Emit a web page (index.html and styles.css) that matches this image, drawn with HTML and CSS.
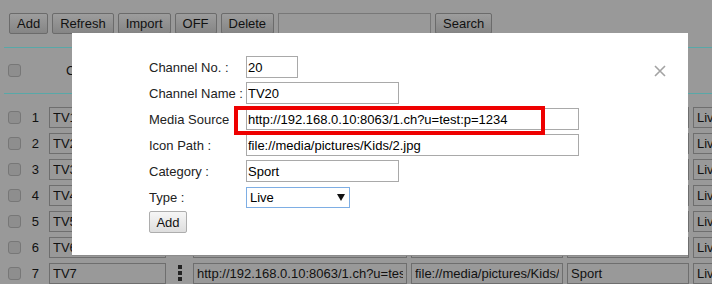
FILE: index.html
```html
<!DOCTYPE html>
<html lang="en">
<head>
    <meta charset="UTF-8">
    <meta name="viewport" content="width=device-width, initial-scale=1.0">
    <title>Channels</title>
    <link rel="stylesheet" href="styles.css">
</head>
<body>
    <div class="page">
        <div class="toolbar">
            <button>Add</button>
            <button>Refresh</button>
            <button>Import</button>
            <button>OFF</button>
            <button>Delete</button>
            <input type="text" class="search-box">
            <button>Search</button>
        </div>

        <div class="channel-list">
            <div class="list-head">
                <span class="check"></span>
                <span class="head-title">Channel No.</span>
            </div>
            <div class="list-body">
                <div class="row">
                    <span class="check"></span><span class="num">1</span>
                    <input type="text" class="cell-name" value="TV1">
                    <span class="more"></span>
                    <input type="text" class="cell-url" value="http://192.168.0.10:8063/1.ch?u=test:p=1234">
                    <input type="text" class="cell-icon" value="file://media/pictures/Kids/2.jpg">
                    <input type="text" class="cell-cat" value="Sport">
                    <span class="cell-type">Live</span>
                </div>
                <div class="row">
                    <span class="check"></span><span class="num">2</span>
                    <input type="text" class="cell-name" value="TV2">
                    <span class="more"></span>
                    <input type="text" class="cell-url" value="http://192.168.0.10:8063/1.ch?u=test:p=1234">
                    <input type="text" class="cell-icon" value="file://media/pictures/Kids/2.jpg">
                    <input type="text" class="cell-cat" value="Sport">
                    <span class="cell-type">Live</span>
                </div>
                <div class="row">
                    <span class="check"></span><span class="num">3</span>
                    <input type="text" class="cell-name" value="TV3">
                    <span class="more"></span>
                    <input type="text" class="cell-url" value="http://192.168.0.10:8063/1.ch?u=test:p=1234">
                    <input type="text" class="cell-icon" value="file://media/pictures/Kids/2.jpg">
                    <input type="text" class="cell-cat" value="Sport">
                    <span class="cell-type">Live</span>
                </div>
                <div class="row">
                    <span class="check"></span><span class="num">4</span>
                    <input type="text" class="cell-name" value="TV4">
                    <span class="more"></span>
                    <input type="text" class="cell-url" value="http://192.168.0.10:8063/1.ch?u=test:p=1234">
                    <input type="text" class="cell-icon" value="file://media/pictures/Kids/2.jpg">
                    <input type="text" class="cell-cat" value="Sport">
                    <span class="cell-type">Live</span>
                </div>
                <div class="row">
                    <span class="check"></span><span class="num">5</span>
                    <input type="text" class="cell-name" value="TV5">
                    <span class="more"></span>
                    <input type="text" class="cell-url" value="http://192.168.0.10:8063/1.ch?u=test:p=1234">
                    <input type="text" class="cell-icon" value="file://media/pictures/Kids/2.jpg">
                    <input type="text" class="cell-cat" value="Sport">
                    <span class="cell-type">Live</span>
                </div>
                <div class="row">
                    <span class="check"></span><span class="num">6</span>
                    <input type="text" class="cell-name" value="TV6">
                    <span class="more"></span>
                    <input type="text" class="cell-url" value="http://192.168.0.10:8063/1.ch?u=test:p=1234">
                    <input type="text" class="cell-icon" value="file://media/pictures/Kids/2.jpg">
                    <input type="text" class="cell-cat" value="Sport">
                    <span class="cell-type">Live</span>
                </div>
                <div class="row">
                    <span class="check"></span><span class="num">7</span>
                    <input type="text" class="cell-name" value="TV7">
                    <span class="more">
                        <svg width="4" height="16" viewBox="0 0 4 16"><rect x="0" y="0" width="4" height="4" fill="#222"/><rect x="0" y="6" width="4" height="4" fill="#222"/><rect x="0" y="12" width="4" height="4" fill="#222"/></svg>
                    </span>
                    <input type="text" class="cell-url" value="http://192.168.0.10:8063/1.ch?u=test:p=1234">
                    <input type="text" class="cell-icon" value="file://media/pictures/Kids/2.jpg">
                    <input type="text" class="cell-cat" value="Sport">
                    <span class="cell-type">Live</span>
                </div>
            </div>
        </div>
    </div>

    <div class="modal">
        <span class="modal-close">
            <svg width="12" height="12" viewBox="0 0 12 12"><path d="M1 1 L11 11 M11 1 L1 11" stroke="#a3a3a3" stroke-width="1.6" fill="none"/></svg>
        </span>
        <div class="channel-form">
            <div class="form-row">
                <label>Channel No. :</label>
                <input type="text" class="w-short" value="20">
            </div>
            <div class="form-row">
                <label>Channel Name :</label>
                <input type="text" class="w-mid" value="TV20">
            </div>
            <div class="form-row">
                <label>Media Source</label>
                <input type="text" class="w-long" value="http://192.168.0.10:8063/1.ch?u=test:p=1234">
            </div>
            <div class="form-row">
                <label>Icon Path :</label>
                <input type="text" class="w-long" value="file://media/pictures/Kids/2.jpg">
            </div>
            <div class="form-row">
                <label>Category :</label>
                <input type="text" class="w-mid" value="Sport">
            </div>
            <div class="form-row">
                <label>Type :</label>
                <span class="select-wrap">
                    <select class="type-select"><option>Live</option></select>
                    <svg class="select-arrow" width="8" height="7" viewBox="0 0 8 7"><path d="M0 0 H8 L4 7 Z" fill="#111"/></svg>
                </span>
            </div>
            <button class="add-btn">Add</button>
        </div>
    </div>

    <div class="highlight"></div>
</body>
</html>
```

FILE: styles.css
```css
body {
    margin: 0;
    background-color: #999999;
    font-family: "Liberation Sans", Arial, sans-serif;
    font-size: 13px;
    color: #111;
    overflow: hidden;
}
.page {
    width: 712px;
    height: 284px;
}

/* toolbar behind the dialog */
.toolbar {
    display: flex;
    gap: 4px;
    padding: 13px 0 0 9px;
}
.toolbar button {
    height: 21px;
    padding: 0 7px;
    border: 1px solid #6b6b6b;
    border-radius: 2px;
    background: linear-gradient(#9d9d9d, #858585);
    font-family: inherit;
    font-size: 13px;
    color: #111;
    flex: none;
}
.toolbar .search-box {
    width: 153px;
    height: 21px;
    box-sizing: border-box;
    border: 1px solid #787878;
    background: transparent;
    flex: none;
}

/* channel list */
.channel-list {
    margin: 13px 0 0 4px;
    border-top: 1px solid #58a8a8;
}
.list-head {
    display: flex;
    align-items: center;
    height: 45px;
    padding-left: 4px;
    border-bottom: 1px solid #58a8a8;
}
.head-title {
    margin-left: 45px;
    white-space: nowrap;
}
.list-body {
    padding-top: 10px;
}
.check {
    width: 13px;
    height: 13px;
    box-sizing: border-box;
    border: 1px solid #777;
    border-radius: 3px;
    background: #8e8e8e;
    flex: none;
}
.row {
    display: flex;
    align-items: center;
    height: 26px;
    padding-left: 4px;
}
.num {
    width: 18px;
    text-align: right;
    margin-right: 10px;
    flex: none;
}
.row input,
.cell-type {
    height: 21px;
    box-sizing: border-box;
    border: 1px solid #6e6e6e;
    background: transparent;
    padding: 0 3px;
    font-family: inherit;
    font-size: 13px;
    color: #111;
    flex: none;
}
.cell-name { width: 117px; }
.more {
    width: 26px;
    display: flex;
    justify-content: center;
    padding-left: 1px;
    flex: none;
}
.cell-url { width: 214px; margin-right: 4px; }
.cell-icon { width: 152px; margin-right: 4px; }
.cell-cat { width: 122px; margin-right: 4px; }
.cell-type {
    width: 60px;
    line-height: 19px;
    padding-left: 3px;
}

/* dialog */
.modal {
    position: absolute;
    left: 72px;
    top: 33px;
    width: 616px;
    height: 223px;
    box-sizing: border-box;
    background: #fff;
    border-bottom: 1px solid #8c8c8c;
}
.modal-close {
    position: absolute;
    left: 582px;
    top: 32px;
    line-height: 0;
}
.channel-form {
    padding: 21px 0 0 77px;
    color: #222;
}
.form-row {
    display: flex;
    align-items: center;
    height: 26px;
}
.form-row label {
    width: 97px;
    flex: none;
}
.form-row input {
    height: 22px;
    box-sizing: border-box;
    border: 1px solid #a9a9a9;
    padding: 0 1px;
    font-family: inherit;
    font-size: 13px;
    color: #000;
}
.w-short { width: 52px; }
.w-mid { width: 153px; }
.w-long { width: 333px; }
.select-wrap {
    position: relative;
    display: inline-block;
    line-height: 0;
}
.type-select {
    appearance: none;
    width: 104px;
    height: 21px;
    border: 1px solid #7eaee4;
    border-radius: 0;
    background: #fff;
    padding: 0 3px;
    font-family: inherit;
    font-size: 13px;
    color: #000;
}
.select-arrow {
    position: absolute;
    left: 91px;
    top: 7px;
}
.add-btn {
    margin-top: 1px;
    width: 38px;
    height: 22px;
    padding: 0;
    border: 1px solid #adadad;
    border-radius: 2px;
    background: linear-gradient(#f6f6f6, #dedede);
    font-family: inherit;
    font-size: 13px;
    color: #111;
}

/* annotation box around the media source */
.highlight {
    position: absolute;
    left: 234px;
    top: 106px;
    width: 311px;
    height: 29px;
    box-sizing: border-box;
    border: 4px solid #ee0000;
}
```
